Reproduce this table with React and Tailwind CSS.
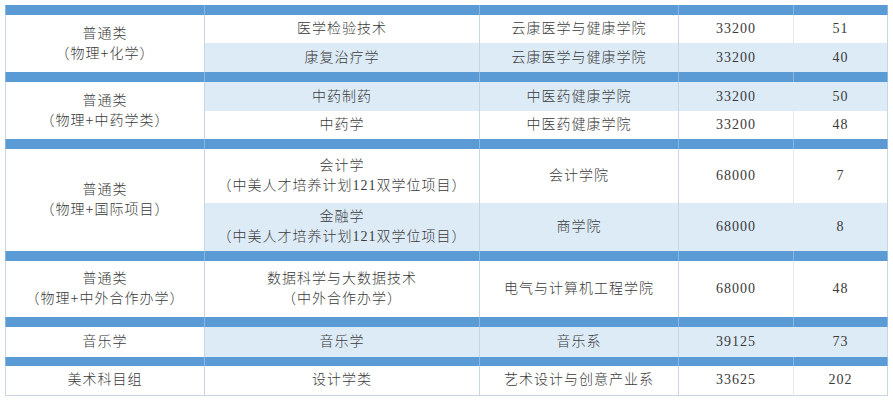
import React from 'react';

// 招生计划表：分组蓝条 + 专业行
const groups = [
  {
    name: ['普通类', '（物理+化学）'],
    rows: [
      { major: ['医学检验技术'], school: '云康医学与健康学院', fee: '33200', plan: '51', h: 'h-[28px]', light: false },
      { major: ['康复治疗学'], school: '云康医学与健康学院', fee: '33200', plan: '40', h: 'h-[29px]', light: true },
    ],
  },
  {
    name: ['普通类', '（物理+中药学类）'],
    rows: [
      { major: ['中药制药'], school: '中医药健康学院', fee: '33200', plan: '50', h: 'h-[29px]', light: true },
      { major: ['中药学'], school: '中医药健康学院', fee: '33200', plan: '48', h: 'h-[28px]', light: false },
    ],
  },
  {
    name: ['普通类', '（物理+国际项目）'],
    rows: [
      { major: ['会计学', '（中美人才培养计划121双学位项目）'], school: '会计学院', fee: '68000', plan: '7', h: 'h-[54px]', light: false },
      { major: ['金融学', '（中美人才培养计划121双学位项目）'], school: '商学院', fee: '68000', plan: '8', h: 'h-[48px]', light: true },
    ],
  },
  {
    name: ['普通类', '（物理+中外合作办学）'],
    rows: [
      { major: ['数据科学与大数据技术', '（中外合作办学）'], school: '电气与计算机工程学院', fee: '68000', plan: '48', h: 'h-[56px]', light: false },
    ],
  },
  {
    name: ['音乐学'],
    rows: [
      { major: ['音乐学'], school: '音乐系', fee: '39125', plan: '73', h: 'h-[30px]', light: true },
    ],
  },
  {
    name: ['美术科目组'],
    rows: [
      { major: ['设计学类'], school: '艺术设计与创意产业系', fee: '33625', plan: '202', h: 'h-[29px]', light: false },
    ],
  },
];

const barHeights = ['h-[10px]', 'h-[10px]', 'h-[10px]', 'h-[10px]', 'h-[10px]', 'h-[9px]'];

function Bar({ h }) {
  return (
    <tr className={h}>
      {[0, 1, 2, 3, 4].map((i) => (
        <td key={i} className="bg-[#5b9bd5] border-x border-[#8ab6e2] p-0" />
      ))}
    </tr>
  );
}

export default function App() {
  const cell = 'border-x border-[#c8d5e4] text-center align-middle p-0';
  return (
    <div className="bg-white w-[893px] h-[400px] pt-[5px] pl-[5px] font-['Liberation_Serif','Noto_Sans_CJK_SC',serif] font-light text-[14px] tracking-[1px] leading-[20px] text-[#3a3a3a]">
      <table className="table-fixed border-collapse w-[883px] border-b border-[#c8d5e4]">
        <colgroup>
          <col className="w-[199px]" />
          <col className="w-[275px]" />
          <col className="w-[199px]" />
          <col className="w-[115px]" />
          <col className="w-[94px]" />
        </colgroup>
        <tbody>
          {groups.map((g, gi) => (
            <React.Fragment key={gi}>
              <Bar h={barHeights[gi]} />
              {g.rows.map((r, ri) => {
                const bg = r.light ? 'bg-[#ddebf7]' : 'bg-white';
                return (
                  <tr key={ri} className={r.h}>
                    {ri === 0 && (
                      <td rowSpan={g.rows.length} className={`${cell} bg-white`}>
                        {g.name.map((t, i) => (
                          <div key={i}>{t}</div>
                        ))}
                      </td>
                    )}
                    <td className={`${cell} ${bg}`}>
                      {r.major.map((t, i) => (
                        <div key={i}>{t}</div>
                      ))}
                    </td>
                    <td className={`${cell} ${bg}`}>{r.school}</td>
                    <td className={`${cell} ${bg} border-x-[#e6e9ee]`}>{r.fee}</td>
                    <td className={`${cell} ${bg}`}>{r.plan}</td>
                  </tr>
                );
              })}
            </React.Fragment>
          ))}
        </tbody>
      </table>
    </div>
  );
}
